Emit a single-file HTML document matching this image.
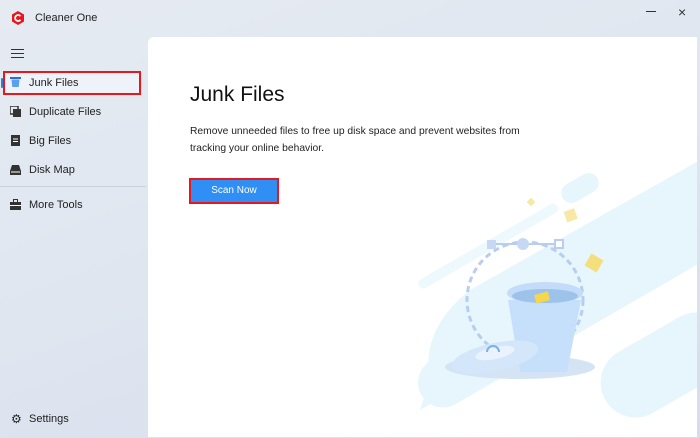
<!DOCTYPE html>
<html><head><meta charset="utf-8"><style>
*{margin:0;padding:0;box-sizing:border-box}
body{width:700px;height:438px;overflow:hidden;font-family:"Liberation Sans",sans-serif;background:linear-gradient(160deg,#e6ebf2 0%,#dfe6f0 50%,#d6dcec 100%);position:relative;color:#1a1a1a}
.t{position:absolute;font-size:11px;color:#222}
.panel{position:absolute;left:148px;top:37px;width:549px;height:400px;background:#fff;border-radius:6px 0 0 0;overflow:hidden}
.nav{position:absolute;left:10px;font-size:11px;color:#222}
.ico{position:absolute;left:10px;width:11px;height:11px}
</style></head><body>
<svg style="position:absolute;left:10px;top:10px" width="16" height="16" viewBox="0 0 16 16"><path d="M8 1L14 4.5V11.5L8 15L2 11.5V4.5Z" fill="#e8161d"/><path d="M10.5 6.2A3 3 0 1 0 10.5 9.8" stroke="#fff" stroke-width="1.8" fill="none"/></svg>
<div class="t" style="left:35px;top:12px;font-size:11px">Cleaner One</div>
<div style="position:absolute;left:646px;top:11px;width:10px;height:1px;background:#333"></div>
<div style="position:absolute;left:678px;top:4px;font-size:14px;color:#333">×</div>
<div style="position:absolute;left:11px;top:49px;width:13px;height:1.3px;background:#333;box-shadow:0 4px 0 #333,0 8px 0 #333"></div>
<div style="position:absolute;left:3px;top:71px;width:138px;height:24px;border:2px solid #e8161d;background:#eef3f9"></div>
<div style="position:absolute;left:1px;top:78px;width:2px;height:10px;background:#2b7ee0;border-radius:1px"></div>
<svg class="ico" style="top:76px" viewBox="0 0 11 11"><rect x="0" y="1" width="11" height="2" fill="#2b6ed8"/><path d="M1.5 3.5H9.5L8.7 11H2.3Z" fill="#5aa0ee"/></svg>
<div class="nav" style="left:29px;top:77px">Junk Files</div>
<svg class="ico" style="top:106px" viewBox="0 0 11 11"><rect x="0" y="0" width="8" height="8" fill="none" stroke="#333" stroke-width="1.5"/><rect x="3" y="3" width="8" height="8" fill="#333"/></svg>
<div class="nav" style="left:29px;top:106px">Duplicate Files</div>
<svg class="ico" style="top:135px" viewBox="0 0 11 11"><rect x="1" y="0" width="9" height="11" fill="#333"/><path d="M3 4h5M3 6.5h5" stroke="#fff"/></svg>
<div class="nav" style="left:29px;top:135px">Big Files</div>
<svg class="ico" style="top:164px" viewBox="0 0 11 11"><path d="M2 1h7l2 6v4H0V7z" fill="#333"/><path d="M1 8h9" stroke="#fff"/></svg>
<div class="nav" style="left:29px;top:164px">Disk Map</div>
<div style="position:absolute;left:0;top:186px;width:146px;height:1px;background:#c9d2de"></div>
<svg class="ico" style="top:199px" viewBox="0 0 11 11"><rect x="3.5" y="0.5" width="4" height="3" fill="none" stroke="#333"/><rect x="0" y="3" width="11" height="8" fill="#333"/><path d="M0 6.5h11" stroke="#fff"/></svg>
<div class="nav" style="left:29px;top:199px">More Tools</div>
<div class="nav" style="left:11px;top:412px;font-size:12px">⚙</div>
<div class="nav" style="left:29px;top:413px">Settings</div>
<div class="panel">
<svg style="position:absolute;left:0;top:0" width="549" height="400" viewBox="148 37 549 400">
<g fill="#e6f6fc">
<path d="M420 410L700 250V160L470 290Q420 330 430 380Z"/>
<rect x="400" y="290" width="330" height="50" rx="25" transform="rotate(-30 560 315)"/>
<rect x="600" y="345" width="140" height="70" rx="35" transform="rotate(-30 640 380)"/>
<rect x="560" y="178" width="40" height="20" rx="10" transform="rotate(-30 580 188)"/>
<rect x="408" y="240" width="160" height="10" rx="5" transform="rotate(-30 490 245)" fill="#eef9fd"/>
</g>
<ellipse cx="520" cy="367" rx="75" ry="12" fill="#d5e4f4"/>
<circle cx="525" cy="300" r="58" fill="none" stroke="#b9cdf0" stroke-width="3" stroke-dasharray="6 4"/>
<path d="M493 244H558" stroke="#b9cdf0" stroke-width="2"/>
<rect x="487" y="240" width="9" height="9" fill="#c7d8f5"/><rect x="555" y="240" width="8" height="8" fill="#fff" stroke="#b9cdf0" stroke-width="2"/><circle cx="523" cy="244" r="6" fill="#c7d8f5"/>
<path d="M508 300L520 372H567L581 300Z" fill="#c6e0fb"/>
<ellipse cx="545" cy="293" rx="38" ry="11" fill="#c2dcf9"/>
<ellipse cx="545" cy="296" rx="33" ry="7" fill="#9ec3ea"/>
<rect x="535" y="293" width="14" height="9" fill="#f6d74c" transform="rotate(-15 542 297)"/>
<ellipse cx="495" cy="357" rx="44" ry="14" fill="#d4e6fa" transform="rotate(-12 495 357)"/>
<ellipse cx="495" cy="353" rx="20" ry="6" fill="#eaf3fd" transform="rotate(-12 495 353)"/>
<path d="M487 352a6 6 0 0 1 12 0" stroke="#7ab1ea" stroke-width="2" fill="none"/>
<rect x="565" y="210" width="11" height="11" fill="#f7e8a4" transform="rotate(-20 570 215)"/>
<rect x="587" y="256" width="14" height="14" fill="#f4df7c" transform="rotate(30 594 263)"/>
<rect x="528" y="199" width="6" height="6" fill="#f7e8a4" transform="rotate(45 531 202)"/>
</svg>
<div style="position:absolute;left:42px;top:46px;font-size:21px;color:#111">Junk Files</div>
<div style="position:absolute;left:42px;top:86px;font-size:10.3px;line-height:17px;color:#222;width:345px">Remove unneeded files to free up disk space and prevent websites from tracking your online behavior.</div>
<div style="position:absolute;left:41px;top:141px;width:90px;height:26px;border:2px solid #e8161d;background:#2f8ff5;color:#fff;font-size:10px;text-align:center;line-height:22px">Scan Now</div>
</div>
</body></html>
